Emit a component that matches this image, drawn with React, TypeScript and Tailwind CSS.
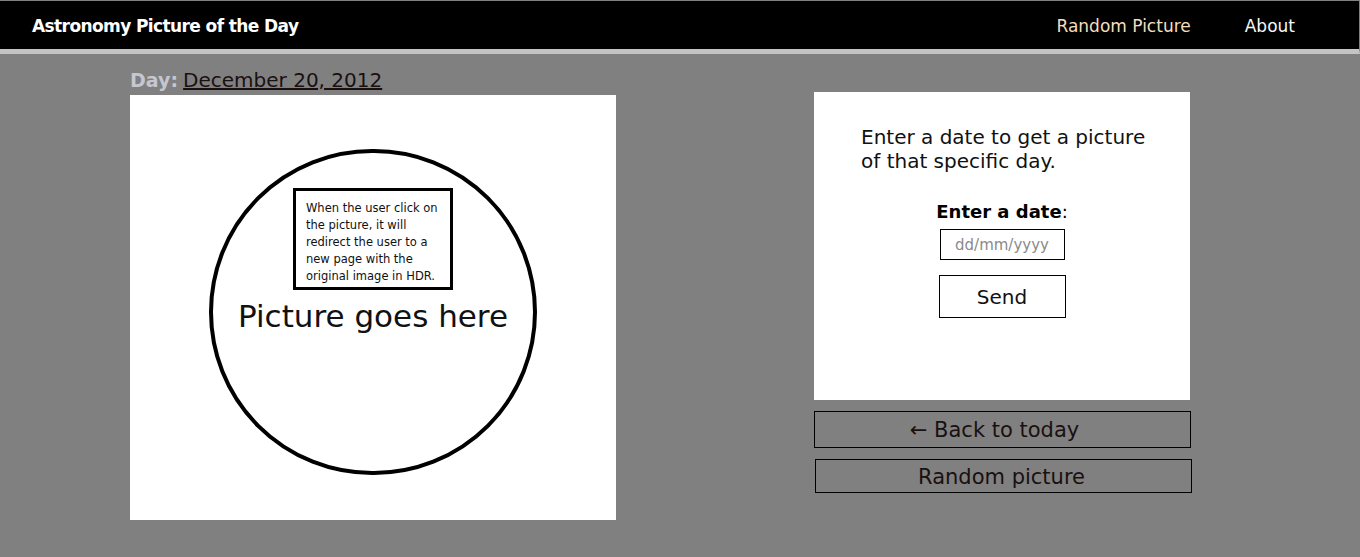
export default function App() {
  return (
    <div className="min-h-[557px] bg-[#808080] font-['DejaVu_Sans',sans-serif]">
      <nav className="flex h-[54px] items-center border-t border-r border-b-[5px] border-t-[#808080] border-r-[#808080] border-b-[#c4c4c4] bg-black pl-[32px] pr-[64px] pt-[3px]">
        <div className="text-[17px] font-bold tracking-[-0.6px] text-white">Astronomy Picture of the Day</div>
        <div className="ml-auto flex gap-[54px] text-[17px]">
          <a className="text-[#f3dfbd]">Random Picture</a>
          <a className="text-[#f6f6f6]">About</a>
        </div>
      </nav>

      <main className="flex pl-[130px]">
        <section className="w-[486px] pt-[12px]">
          <div className="h-[29px] leading-[29px]">
            <span className="text-[19px] font-bold text-[#c5c6cf]">Day:</span>{" "}
            <a className="text-[20px] text-[#1a1010] underline">December 20, 2012</a>
          </div>
          <div className="flex h-[425px] justify-center bg-white pt-[54px]">
            <div className="flex h-[326px] w-[328px] flex-col items-center rounded-full border-4 border-black pt-[35px]">
              <div className="h-[102px] w-[160px] border-[3px] border-black pl-[10px] pr-[6px] pt-[9px] text-[11.5px] leading-[17px] text-[#111]">
                When the user click on the picture, it will redirect the user to a new page with the original image in HDR.
              </div>
              <div className="mt-[6px] text-[31px] leading-[40px] text-[#111]">Picture goes here</div>
            </div>
          </div>
        </section>

        <section className="ml-[198px] mt-[38px] w-[377px]">
          <div className="h-[308px] w-[376px] bg-white pt-[33px]">
            <p className="pl-[47px] pr-[30px] text-[20px] leading-[24px] text-[#111]">
              Enter a date to get a picture of that specific day.
            </p>
            <div className="mt-[28px] flex flex-col items-center">
              <label className="text-[18px] leading-[22px] text-black">
                <span className="font-bold">Enter a date</span>:
              </label>
              <input
                placeholder="dd/mm/yyyy"
                className="mt-[6px] h-[31px] w-[125px] border border-black px-[6px] text-center text-[15px] text-[#111] outline-none placeholder:text-[#8a8a8a]"
              />
              <button className="mt-[15px] h-[43px] w-[127px] border border-black bg-white pt-[1px] text-[20px] text-[#111]">
                Send
              </button>
            </div>
          </div>
          <button className="mt-[11px] flex h-[37px] w-[377px] items-center justify-center border border-black pr-[16px] pt-[3px] text-[21px] text-[#1a1010]">
            ← Back to today
          </button>
          <button className="ml-[1px] mt-[11px] flex h-[34px] w-[377px] items-center justify-center border border-black pr-[4px] pt-[3px] text-[21px] text-[#1a1010]">
            Random picture
          </button>
        </section>
      </main>
    </div>
  );
}
